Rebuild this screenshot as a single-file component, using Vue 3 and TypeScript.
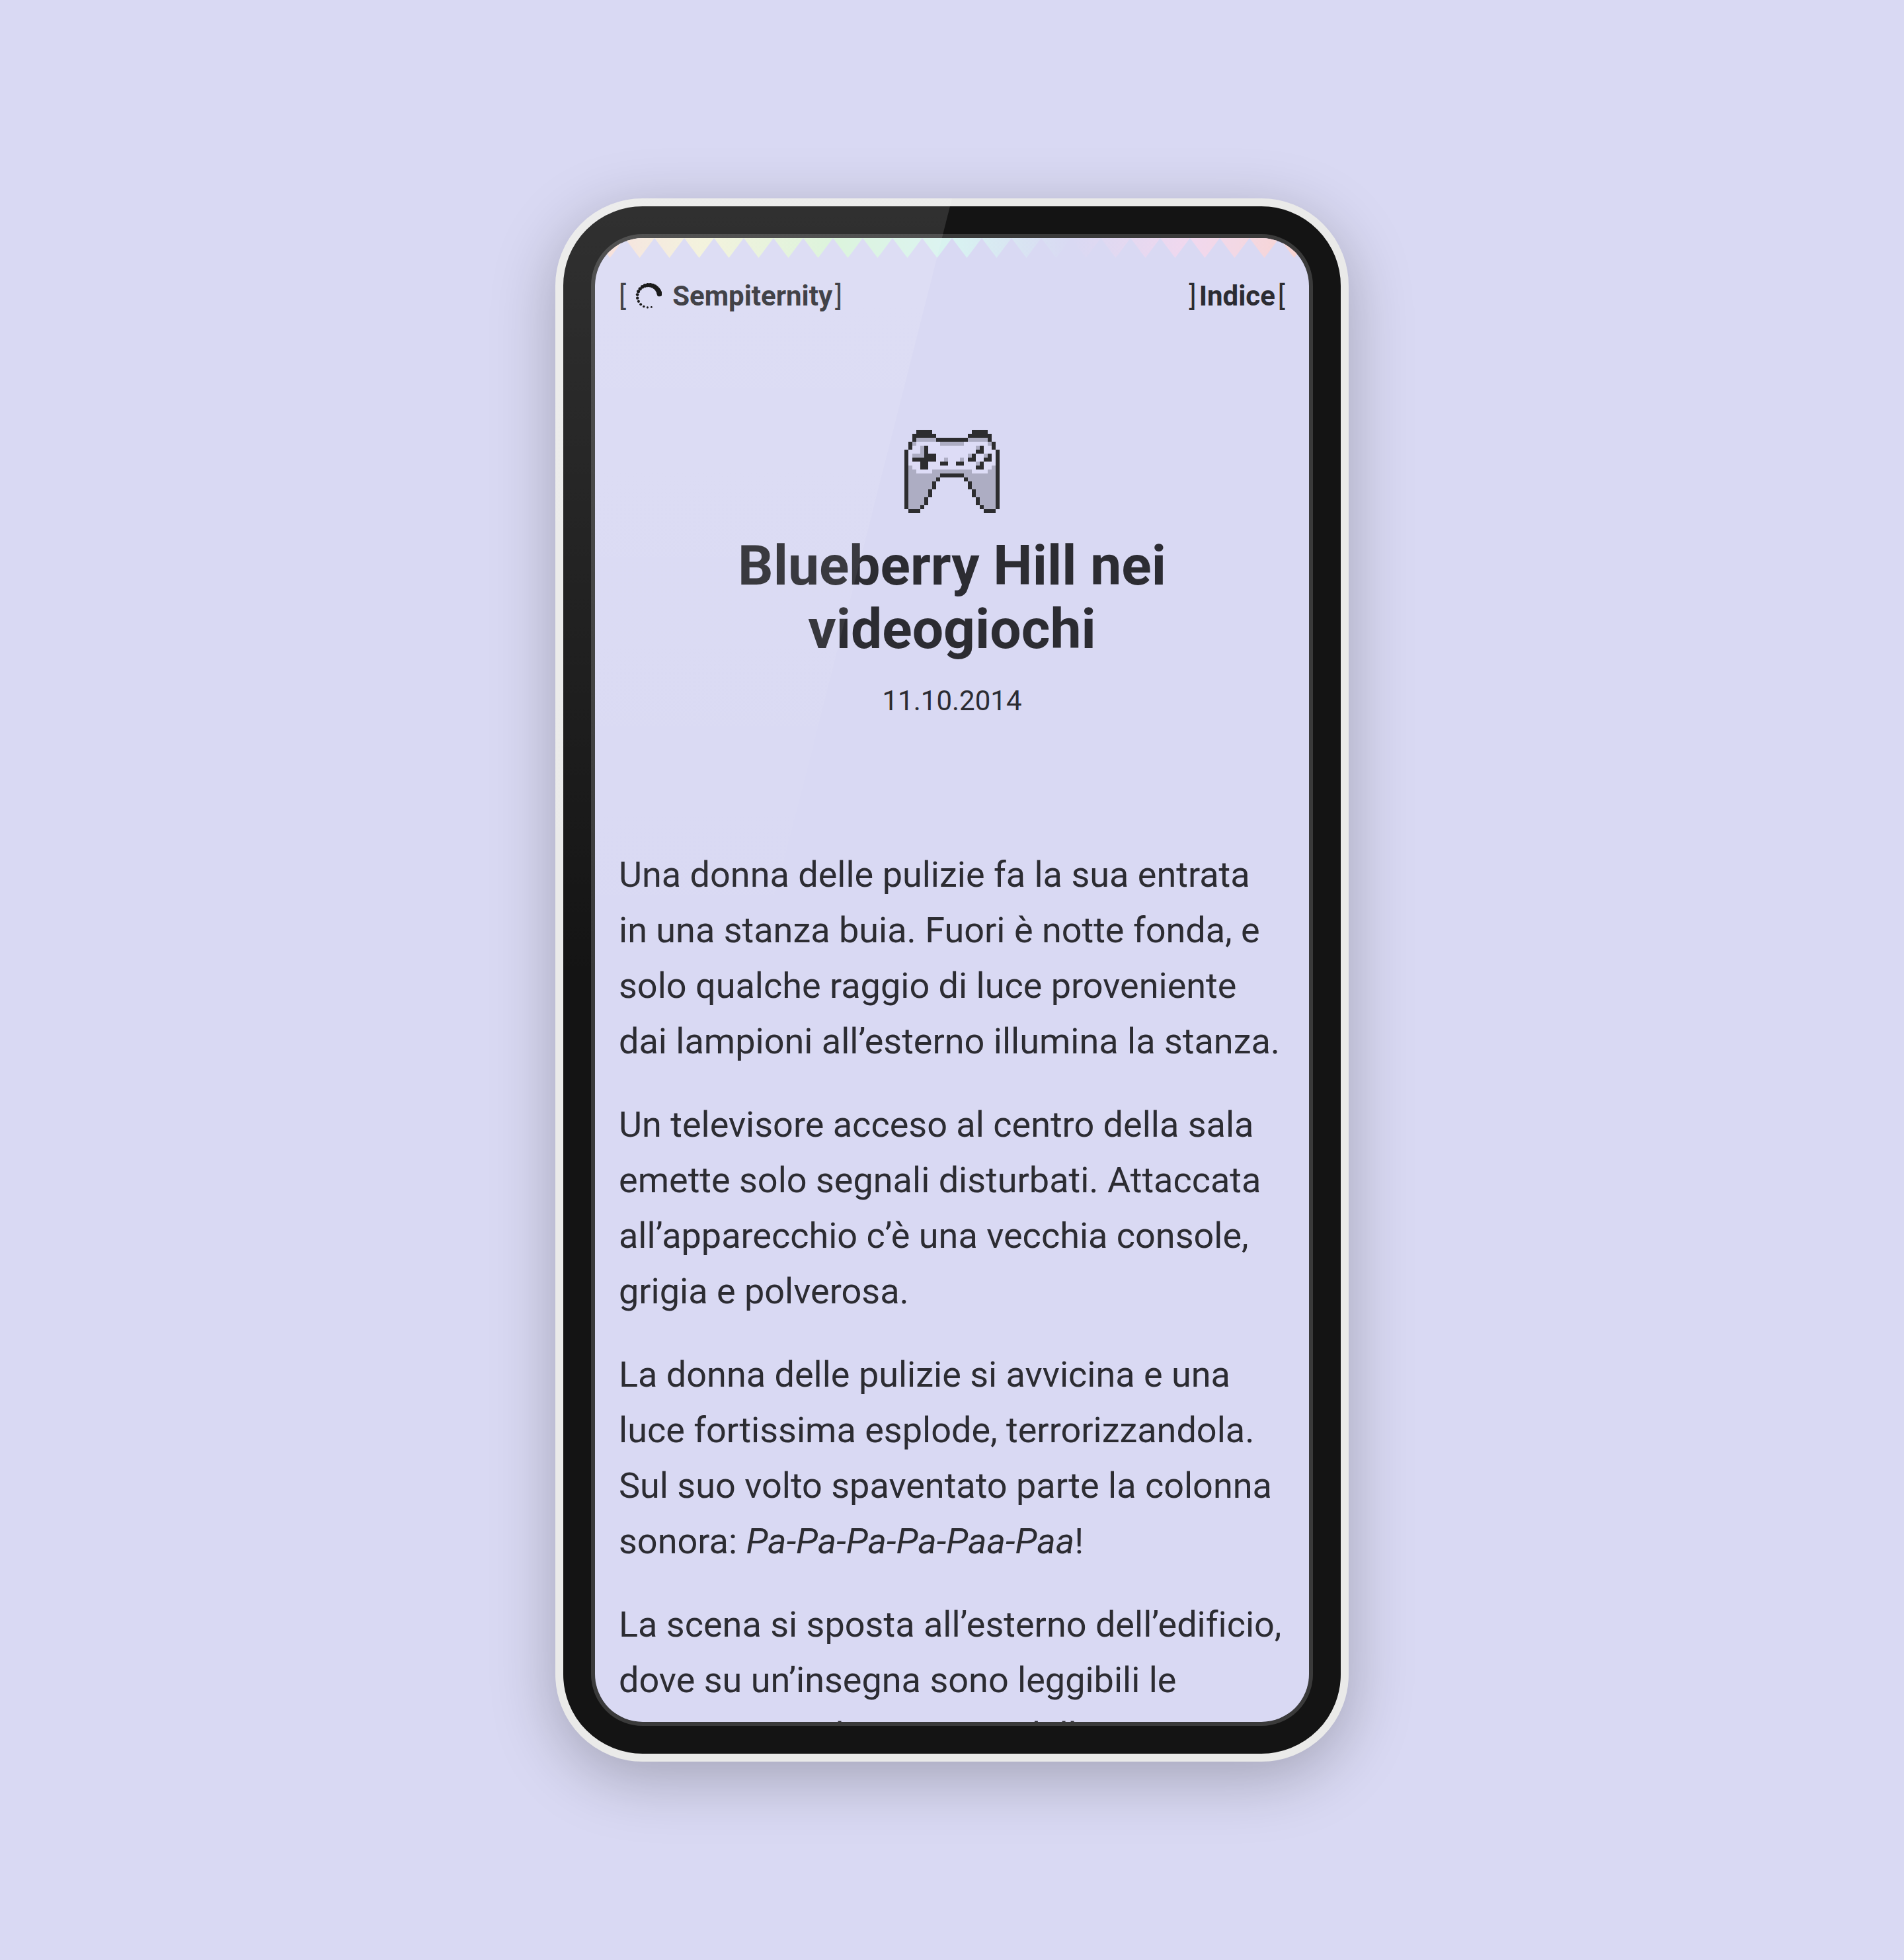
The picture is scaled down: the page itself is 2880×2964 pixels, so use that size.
<script setup lang="ts">
interface Dot { cx: number; cy: number; r: number }
interface Cell { key: string; x: number; y: number; w: number; fill: string }

// Trail of dots that shrinks and spreads out as it runs round the circle
const DOTS = 21
const dots: Dot[] = Array.from({ length: DOTS }, (_, i) => {
  const t = i / (DOTS - 1)
  const angle = ((-12 - 273 * Math.pow(t, 1.5)) * Math.PI) / 180
  return {
    cx: 20 + 17 * Math.cos(angle),
    cy: 20 + 17 * Math.sin(angle),
    r: 3.9 - 2.5 * Math.pow(t, 1.4),
  }
})

// 24 x 21 pixel art: # outline, o shade, - highlight
const gamepad: string[] = [
  '   ####          ####   ',
  '  ######        ######  ',
  '  #ooooo########ooooo#  ',
  ' #o------oooooo------o# ',
  ' #--o#------------o#--# ',
  '#---o#------------##---#',
  '#-ooo###--------o#--o#-#',
  '#-######--o---o-##--##-#',
  '#---##---##--##---o#---#',
  '#o--##------------##--o#',
  '#oo----oooooooooo----oo#',
  '#oooooooo######oooooooo#',
  '#ooooooo#      #ooooooo#',
  '#oooooo#        #oooooo#',
  '#oooooo#        #oooooo#',
  '#ooooo#          #ooooo#',
  '#ooooo#          #ooooo#',
  '#oooo#            #oooo#',
  '#oooo#            #oooo#',
  '#ooo#              #ooo#',
  ' ###                ### ',
]
const fills: Record<string, string> = { '#': '#2d2d2f', o: '#adadc3', '-': '#dddcf6' }

const cells: Cell[] = gamepad.flatMap((row, y) =>
  Array.from(row.matchAll(/#+|o+|-+/g), (run) => ({
    key: `${y}-${run.index}`,
    x: run.index ?? 0,
    y,
    w: run[0].length,
    fill: fills[run[0][0]],
  })),
)

const bunting: string = Array.from({ length: 24 }, (_, i) => `M${i * 45} 0h45l-22.5 30z`).join('')
</script>

<template>
  <div class="stage">
    <div class="phone">
      <div class="bezel">
        <div class="screen">
          <svg class="bunting" viewBox="0 0 1080 30" preserveAspectRatio="none" aria-hidden="true">
            <defs>
              <linearGradient id="rainbow" gradientUnits="userSpaceOnUse" x1="0" y1="0" x2="1080" y2="0">
                <stop offset="0" stop-color="#f8dad5" />
                <stop offset="0.06" stop-color="#f4e5db" />
                <stop offset="0.15" stop-color="#f2f1d9" />
                <stop offset="0.3333" stop-color="#d8f3d8" />
                <stop offset="0.5" stop-color="#d8f3f1" />
                <stop offset="0.6667" stop-color="#d9d9f3" />
                <stop offset="0.8333" stop-color="#f1d8ee" />
                <stop offset="0.9" stop-color="#f3d8e4" />
                <stop offset="1" stop-color="#f9d3cd" />
              </linearGradient>
            </defs>
            <path :d="bunting" fill="url(#rainbow)" />
          </svg>
          <header class="bar">
            <a class="link" href="#home">
              <span class="bracket">[</span>
              <svg class="ring" viewBox="0 0 40 40" aria-hidden="true">
                <circle v-for="(d, i) in dots" :key="i" :cx="d.cx" :cy="d.cy" :r="d.r" />
              </svg>
              <span class="label">Sempiternity</span>
              <span class="bracket">]</span>
            </a>
            <a class="link" href="#indice">
              <span class="bracket">]</span>
              <span class="label">Indice</span>
              <span class="bracket">[</span>
            </a>
          </header>
          <article>
            <div class="intro">
              <svg class="gamepad" viewBox="0 0 24 21" shape-rendering="crispEdges" aria-hidden="true">
                <rect v-for="c in cells" :key="c.key" :x="c.x" :y="c.y" :width="c.w" height="1" :fill="c.fill" />
              </svg>
              <h1>Blueberry Hill nei videogiochi</h1>
              <time datetime="2014-10-11">11.10.2014</time>
            </div>
            <p>Una donna delle pulizie fa la sua entrata in una stanza buia. Fuori è notte fonda, e solo qualche raggio di luce proveniente dai lampioni all’esterno illumina la stanza.</p>
            <p>Un televisore acceso al centro della sala emette solo segnali disturbati. Attaccata all’apparecchio c’è una vecchia console, grigia e polverosa.</p>
            <p>La donna delle pulizie si avvicina e una luce fortissima esplode, terrorizzandola. Sul suo volto spaventato parte la colonna sonora: <em>Pa-Pa-Pa-Pa-Paa-Paa</em>!</p>
            <p>La scena si sposta all’esterno dell’edificio, dove su un’insegna sono leggibili le seguenti parole: Prigione della</p>
          </article>
        </div>
      </div>
      <div class="glare"></div>
    </div>
  </div>
</template>

<style>
body {
  margin: 0;
  background: #d9d9f3;
}
</style>

<style scoped>
.stage {
  min-height: 100vh;
  display: flex;
  align-items: center;
  justify-content: center;
  font-family: Roboto, "Liberation Sans", sans-serif;
  color: #2c2c32;
}
.phone {
  position: relative;
  box-sizing: border-box;
  width: 100%;
  max-width: 1200px;
  border: 12px solid #eaeae9;
  border-radius: 132px;
  background: #141414;
  box-shadow: 0 24px 96px rgba(0, 0, 0, 0.25);
}
.bezel {
  margin: 42px;
  border: 6px solid #3a3a3a;
  border-radius: 78px;
}
.screen {
  aspect-ratio: 1080 / 2244;
  min-height: 0;
  overflow: hidden;
  border-radius: 72px;
  background: #d9d9f3;
}
.glare {
  position: absolute;
  inset: -12px;
  border-radius: 132px;
  clip-path: polygon(0 0, 50% 0, 0 100%);
  background: linear-gradient(rgba(255, 255, 255, 0.12), rgba(255, 255, 255, 0) 50%);
  pointer-events: none;
}
.bunting {
  display: block;
  width: 100%;
  height: 30px;
}
.bar {
  display: flex;
  justify-content: space-between;
  padding: 33px 36px 0;
}
.link {
  display: flex;
  align-items: center;
  font-size: 42px;
  line-height: 50px;
  font-weight: 700;
  color: inherit;
  text-decoration: none;
}
.bracket {
  font-weight: 400;
}
.label {
  margin: 0 4px;
}
.ring {
  width: 40px;
  height: 40px;
  margin: 0 12px 0 14px;
}
article {
  padding: 0 36px;
  font-size: 54px;
  line-height: 84px;
  font-variant-ligatures: none;
}
.intro {
  display: flex;
  flex-direction: column;
  align-items: center;
  padding: 177px 0 191px;
  text-align: center;
}
.gamepad {
  width: 144px;
  height: 126px;
}
h1 {
  margin: 32px 100px 0;
  font-size: 84px;
  line-height: 96px;
  font-weight: 700;
}
time {
  margin-top: 30px;
  font-size: 42px;
  line-height: 60px;
}
p {
  margin: 0 0 42px;
}
</style>
